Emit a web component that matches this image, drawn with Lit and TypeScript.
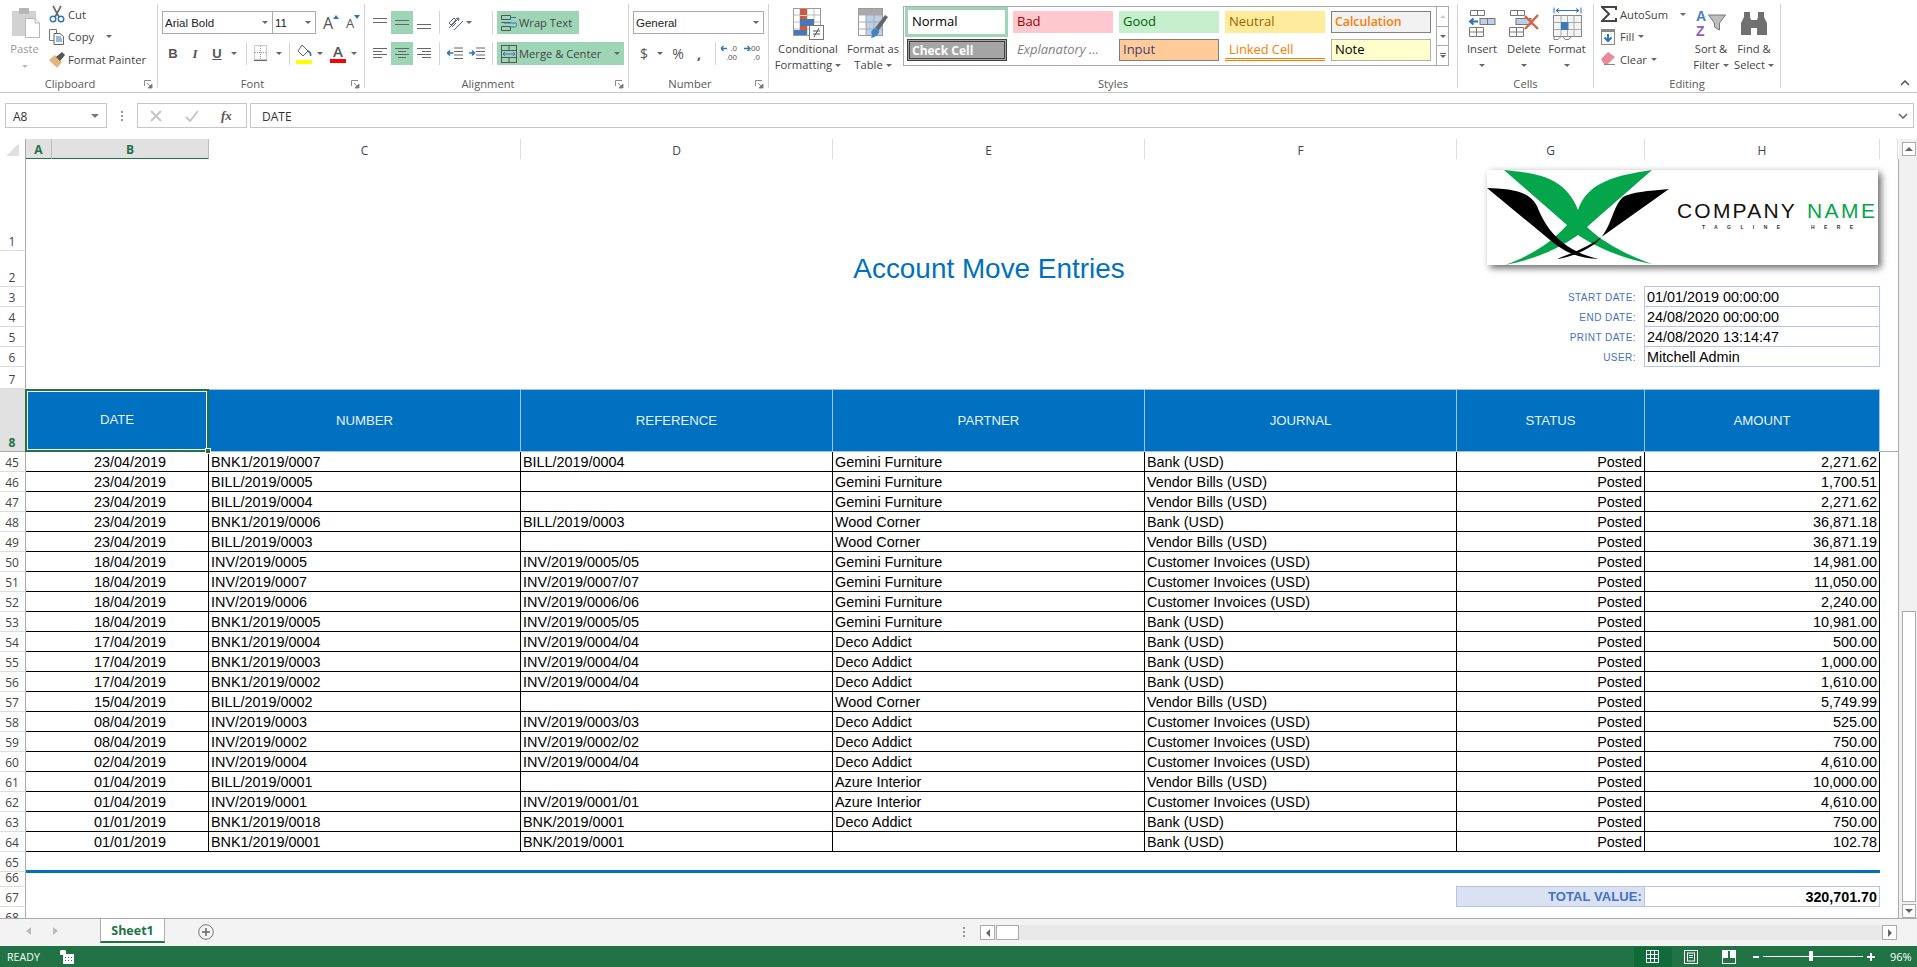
import { LitElement, html, css, svg } from "lit";
import { customElement } from "lit/decorators.js";

type Row = [string, string, string, string, string, string, string, string];
const G = "Gemini Furniture", D = "Deco Addict", W = "Wood Corner", Z = "Azure Interior";
const B = "Bank (USD)", V = "Vendor Bills (USD)", C = "Customer Invoices (USD)";
const ROWS: Row[] = [
  ["45","23/04/2019","BNK1/2019/0007","BILL/2019/0004",G,B,"Posted","2,271.62"],
  ["46","23/04/2019","BILL/2019/0005","",G,V,"Posted","1,700.51"],
  ["47","23/04/2019","BILL/2019/0004","",G,V,"Posted","2,271.62"],
  ["48","23/04/2019","BNK1/2019/0006","BILL/2019/0003",W,B,"Posted","36,871.18"],
  ["49","23/04/2019","BILL/2019/0003","",W,V,"Posted","36,871.19"],
  ["50","18/04/2019","INV/2019/0005","INV/2019/0005/05",G,C,"Posted","14,981.00"],
  ["51","18/04/2019","INV/2019/0007","INV/2019/0007/07",G,C,"Posted","11,050.00"],
  ["52","18/04/2019","INV/2019/0006","INV/2019/0006/06",G,C,"Posted","2,240.00"],
  ["53","18/04/2019","BNK1/2019/0005","INV/2019/0005/05",G,B,"Posted","10,981.00"],
  ["54","17/04/2019","BNK1/2019/0004","INV/2019/0004/04",D,B,"Posted","500.00"],
  ["55","17/04/2019","BNK1/2019/0003","INV/2019/0004/04",D,B,"Posted","1,000.00"],
  ["56","17/04/2019","BNK1/2019/0002","INV/2019/0004/04",D,B,"Posted","1,610.00"],
  ["57","15/04/2019","BILL/2019/0002","",W,V,"Posted","5,749.99"],
  ["58","08/04/2019","INV/2019/0003","INV/2019/0003/03",D,C,"Posted","525.00"],
  ["59","08/04/2019","INV/2019/0002","INV/2019/0002/02",D,C,"Posted","750.00"],
  ["60","02/04/2019","INV/2019/0004","INV/2019/0004/04",D,C,"Posted","4,610.00"],
  ["61","01/04/2019","BILL/2019/0001","",Z,V,"Posted","10,000.00"],
  ["62","01/04/2019","INV/2019/0001","INV/2019/0001/01",Z,C,"Posted","4,610.00"],
  ["63","01/01/2019","BNK1/2019/0018","BNK/2019/0001",D,B,"Posted","750.00"],
  ["64","01/01/2019","BNK1/2019/0001","BNK/2019/0001","",B,"Posted","102.78"],
];
const INFO: [string, string, string][] = [
  ["3","START DATE:","01/01/2019 00:00:00"],
  ["4","END DATE:","24/08/2020 00:00:00"],
  ["5","PRINT DATE:","24/08/2020 13:14:47"],
  ["6","USER:","Mitchell Admin"],
];
const COLS = ["C","D","E","F","G","H"];
const HEADS = ["NUMBER","REFERENCE","PARTNER","JOURNAL","STATUS","AMOUNT"];

const caret = html`<span class="caret"></span>`;
const launcher = html`<svg class="launch" width="9" height="9" viewBox="0 0 9 9"><path d="M0.5 6V0.5H7" fill="none" stroke="#8a8a8a"/><path d="M3 3l4 4M8 4v4H4z" fill="#777" stroke="#777" stroke-width=".8"/></svg>`;
const bars = (rows: number[][], w = 14, h = 14, c = "#666") => html`<svg width=${w} height=${h} viewBox="0 0 ${w} ${h}">${rows.map(r => svg`<rect x=${r[0]} y=${r[1]} width=${r[2]} height="1" fill=${c}/>`)}</svg>`;

const iPaste = html`<svg width="28" height="30" viewBox="0 0 28 30"><rect x="0" y="3" width="24" height="25" fill="#d2d2d2"/><rect x="7" y="0" width="10" height="6" fill="#b5b5b5"/><path d="M13.5 10.5H23l4.5 4.5v14.5h-14z" fill="#fff" stroke="#b8b8b8"/><path d="M23 10.5V15h4.5" fill="none" stroke="#b8b8b8"/></svg>`;
const iCut = html`<svg width="16" height="18" viewBox="0 0 16 18"><path d="M4 1l6 11M12 1L6 12" stroke="#666" stroke-width="1.6" fill="none"/><circle cx="4" cy="14" r="2.8" fill="none" stroke="#2f75b5" stroke-width="1.4"/><circle cx="12" cy="14" r="2.8" fill="none" stroke="#2f75b5" stroke-width="1.4"/></svg>`;
const iCopy = html`<svg width="15" height="16" viewBox="0 0 15 16"><path d="M.5.5h7v11h-7z" fill="#fff" stroke="#777"/><path d="M5 4.5h6l3.5 3v8H5z" fill="#fff" stroke="#666"/><path d="M7 8h5M7 10h6M7 12h6" stroke="#2f75b5"/></svg>`;
const iBrush = html`<svg width="17" height="17" viewBox="0 0 17 17"><path d="M0 9l6-5 7 7-5 6C6 14 2 12 0 9z" fill="#e3b77b"/><path d="M7 6l6-5 3 3-5 6z" fill="#555"/></svg>`;
const iBorder = html`<svg width="19" height="17" viewBox="0 0 19 17"><rect x=".5" y=".5" width="12" height="14" fill="none" stroke="#999" stroke-dasharray="1 1"/><path d="M6.5 1v14M1 7.5h12" stroke="#999" stroke-dasharray="1 1"/><path d="M0 15.5h13" stroke="#666"/></svg>`;
const iFill = html`<svg width="16" height="20" viewBox="0 0 16 20"><path d="M6 1l6 6-5 5-5-5z" fill="#fff" stroke="#666"/><path d="M12 7c2 1 3 3 2.5 5" stroke="#2f75b5" stroke-width="1.6" fill="none"/><rect y="16" width="16" height="4" fill="#ffff00"/></svg>`;
const iOrient = html`<svg width="17" height="18" viewBox="0 0 17 18"><path d="M2 14L12 4" stroke="#666"/><path d="M12 4l-3 .5M12 4l-.5 3" stroke="#666"/><path d="M2 9l5-5 2 2-5 5zM5 13l4-4" fill="none" stroke="#666"/><path d="M7 16l9-9" stroke="#2f75b5"/></svg>`;
const iInd = (flip: boolean) => html`<svg width="16" height="13" viewBox="0 0 16 13"><path d="M7 1h9M7 4.5h9M7 8h9M7 11.5h9" stroke="#666"/>${flip ? svg`<path d="M0 6h5M3 3.5L5.5 6 3 8.5" fill="none" stroke="#2f75b5" stroke-width="1.6"/>` : svg`<path d="M.5 6h6M3 3.5L.5 6 3 8.5" fill="none" stroke="#2f75b5" stroke-width="1.6"/>`}</svg>`;
const iWrap = html`<svg width="17" height="18" viewBox="0 0 17 18"><path d="M.5 1.5h9v4h-9zM.5 12.5h9v4h-9z" fill="none" stroke="#555"/><path d="M.5 8.5h9" stroke="#555"/><path d="M9 3.5h6M3 9h12c1 0 1 4-1 4H8" stroke="#2f75b5" fill="none"/></svg>`;
const iMerge = html`<svg width="17" height="18" viewBox="0 0 17 18"><rect x=".5" y=".5" width="15" height="17" fill="none" stroke="#555"/><path d="M.5 5.5h15M.5 12.5h15M8 .5v5M8 12.5v5" stroke="#555"/><path d="M2 9h12M4 7L2 9l2 2M12 7l2 2-2 2" fill="none" stroke="#2f75b5"/></svg>`;
const iDec = (up: boolean) => html`<div class="decw"><span>${up ? ".0" : ".00"}</span><span>${up ? ".00" : ".0"}</span><svg width="7" height="7" viewBox="0 0 7 7"><path d="M0 3.500h6M${up ? "2.500 1L0 3.500 2.500 6" : "3.500 1L6 3.500 3.500 6"}" fill="none" stroke="#2f75b5" stroke-width="1.300"/></svg></div>`;
const iCond = html`<svg width="31" height="32" viewBox="0 0 31 32"><rect x=".5" y=".5" width="27" height="27" fill="#fff" stroke="#999"/><path d="M7 .5v27M14 .5v27M21 .5v27M.5 7h27M.5 14h27M.5 21h27" stroke="#bbb"/><rect x="7" y="1" width="7" height="6" fill="#d0593c"/><rect x="7" y="8" width="7" height="6" fill="#d0593c"/><rect x="7" y="11" width="14" height="7" fill="#4479b5"/><rect x="7" y="18" width="7" height="7" fill="#d0593c"/><rect x="1" y="22" width="13" height="5" fill="#4479b5"/><rect x="16.500" y="17.500" width="14" height="14" fill="#fff" stroke="#777"/><path d="M20 23h7M20 26h7M26 20l-5 9" stroke="#555" fill="none"/></svg>`;
const iTable = html`<svg width="31" height="32" viewBox="0 0 31 32"><rect x=".5" y=".5" width="24" height="27" fill="#fff" stroke="#999"/><rect x="1" y="1" width="23" height="6" fill="#a9a9a9"/><rect x="8" y="7" width="16" height="20" fill="#bcd0e8"/><path d="M8 .5v27M16 .5v27M.5 7h24M.5 14h24M.5 21h24" stroke="#aaa"/><path d="M17 20l10-13 3 2-9 13z" fill="#666"/><path d="M13 24c2-4 6-5 8-2 1 3-2 7-8 8 1-2 1-4 0-6z" fill="#3f83c4"/></svg>`;
const iInsert = html`<svg width="27" height="27" viewBox="0 0 27 27"><path d="M1.500.5h14v5h-14zM8.500.5v5M.5 17.500h14v9H.500zM7.500 17.500v9M.5 22h14" fill="none" stroke="#777"/><rect x="11" y="8.500" width="15" height="6" fill="#bcd0e8" stroke="#777"/><path d="M18.500 8.500v6" stroke="#777"/><path d="M1 11.500h8M4.500 8.500L1 11.500l3.500 3" fill="none" stroke="#2f75b5" stroke-width="2"/></svg>`;
const iDelete = html`<svg width="31" height="27" viewBox="0 0 31 27"><path d="M1.500.5h14v5h-14zM8.500.5v5M.5 17.500h14v9H.500zM7.500 17.500v9M.5 22h14" fill="none" stroke="#777"/><rect x="7" y="8.500" width="15" height="6" fill="#bcd0e8" stroke="#777"/><path d="M16 6l13 13M29 5L16 19" stroke="#d9633f" stroke-width="2.400"/></svg>`;
const iFormat = html`<svg width="29" height="33" viewBox="0 0 29 33"><path d="M1 .5v6M28 .5v6M3 3.500h23M6 1.500l-3 2 3 2M23 1.500l3 2-3 2" fill="none" stroke="#2f75b5"/><rect x=".5" y="8.500" width="28" height="21" fill="#f4f4f4" stroke="#888"/><path d="M8 8.500v21M21 8.500v21M14.500 8.500v21M.5 15.500h28M.5 22.500h28" stroke="#aaa"/><rect x="8" y="15" width="7.500" height="8" fill="#3f7ab5"/><path d="M1 29.500v3h4l3-3M10 29.500l2 3h4l2-3" fill="none" stroke="#888"/></svg>`;
const iSigma = html`<svg width="16" height="16" viewBox="0 0 16 16"><path d="M15 4V1H1l7 7-7 7h14v-3" fill="none" stroke="#444" stroke-width="2"/></svg>`;
const iFillDown = html`<svg width="14" height="16" viewBox="0 0 14 16"><rect x=".5" y=".5" width="13" height="15" fill="#fff" stroke="#888"/><rect width="14" height="3" fill="#888"/><path d="M7 5v7M3.500 8.500L7 12l3.500-3.500" fill="none" stroke="#2f75b5" stroke-width="2"/></svg>`;
const iEraser = html`<svg width="15" height="14" viewBox="0 0 15 14"><path d="M0 7l7-7 7 5-7 7H3z" fill="#e98a99"/><path d="M3 12.500h11" stroke="#888"/></svg>`;
const iSort = html`<div class="sortic"><div class="azs"><span class="azA">A</span><span class="azZ">Z</span></div><svg width="18" height="17" viewBox="0 0 18 17"><path d="M.5 1h17l-6 8v7l-5-3V9z" fill="#bdbdbd" stroke="#777"/></svg></div>`;
const iFind = html`<svg width="26" height="25" viewBox="0 0 26 25"><path d="M3 6V1h6v5l1 3v15H0V12zM17 6V1h6v5l3 6v12H16V9z" fill="#707070"/><path d="M10 9h6v8h-6z" fill="#707070"/></svg>`;
const iMacro = html`<svg width="14" height="14" viewBox="0 0 14 14"><rect x="3" y="4" width="11" height="10" fill="#fff"/><rect x="0" y="0" width="6" height="5" fill="#fff" rx="1"/><path d="M5 7h1v1H5zM8 7h1v1H8zM11 7h1v1h-1zM5 10h1v1H5zM8 10h1v1H8zM11 10h1v1h-1z" fill="#217346"/></svg>`;
const viewGrid = html`<svg width="14" height="14" viewBox="0 0 14 14"><rect x=".5" y=".5" width="12" height="12" fill="none" stroke="#fff"/><path d="M4.500 .5v12M8.500 .5v12M.5 4.500h12M.5 8.500h12" stroke="#fff"/></svg>`;
const viewPage = html`<svg width="14" height="14" viewBox="0 0 14 14"><rect x=".5" y=".5" width="13" height="13" fill="none" stroke="#fff"/><rect x="3.500" y="3" width="7" height="8" fill="none" stroke="#fff"/><path d="M5 5.500h4M5 7.500h4" stroke="#fff"/></svg>`;
const viewBreak = html`<svg width="14" height="14" viewBox="0 0 14 14"><rect x=".5" y=".5" width="13" height="13" fill="none" stroke="#fff"/><rect x="1" y="1" width="5" height="7" fill="#fff"/><rect x="8" y="1" width="5" height="7" fill="#fff"/></svg>`;
const logo = html`<svg class="logo-svg" width="391" height="95" viewBox="0 0 391 95">
  <path d="M17 0C45 3 78 5 91 40C100 12 130 5 165 0L100 57C115 72 140 85 165 94C140 90 110 78 91 65C70 80 45 90 18 95C45 85 65 72 80 55Z" fill="#05a54b"/>
  <path d="M0 18C22 19 42 20 50 36C58 56 72 80 112 89C92 88 80 84 63 70Z" fill="#000"/>
  <path d="M182 19C160 21 145 22 136 27C124 38 125 62 106 75C96 82 84 87 70 89C82 84 100 78 113 68Z" fill="#000"/>
</svg>`;

@customElement("app-root")
export class AppRoot extends LitElement {
  static styles = css`
    :host { display: flex; flex-direction: column; width: 1917px; height: 967px; overflow: hidden; background: #fff; font-family: "Open Sans", "Noto Sans", sans-serif; color: #444; }
    * { box-sizing: border-box; }
    svg { display: block; flex: none; }
    /* ribbon */
    .ribbon { display: flex; height: 93px; padding-top: 4px; border-bottom: 1px solid #c6c6c6; font-size: 11.2px; flex: none; }
    .group { display: flex; flex-direction: column; height: 84px; border-right: 1px solid #d4d4d4; flex: none; }
    .body { height: 73px; display: flex; }
    .foot { display: flex; height: 11px; line-height: 14px; color: #5a5a5a; }
    .foot span { flex: 1; text-align: center; }
    .launch { margin: 3px 4px 0 4px; }
    .g-clip { width: 158px; } .g-font { width: 207px; } .g-align { width: 264px; } .g-num { width: 140px; } .g-sty { width: 689px; } .g-cells { width: 136px; } .g-edit { width: 187px; }
    .paste { width: 49px; display: flex; flex-direction: column; align-items: center; color: #9a9a9a; padding-top: 4px; }
    .paste svg { margin-left: 3px; }
    .paste .lbl { margin-top: 3px; line-height: 15px; }
    .paste .caret { margin-top: 9px; border-top-color: #bbb; }
    .list { display: flex; flex-direction: column; margin-top: -1px; }
    .l-edit { width: 88px; flex: none; }
    .li { height: 22.5px; display: flex; align-items: center; white-space: nowrap; }
    .li .ic { width: 19px; flex: none; }
    .li .caret { margin-left: 4px; }
    .li .far { margin-left: 12px; }
    .rows { display: flex; flex-direction: column; gap: 8px; padding-top: 7px; }
    .rw { height: 23px; display: flex; align-items: center; }
    .pl4 { padding-left: 4px; } .pl3 { padding-left: 3px; } .pl8 { padding-left: 8px; } .pl7 { padding-left: 7px; }
    .t { display: flex; align-items: center; justify-content: center; height: 23px; flex: none; }
    .w10 { width: 10px; } .w12 { width: 12px; } .w14 { width: 14px; } .w15 { width: 15px; } .w16 { width: 16px; } .w19 { width: 19px; } .w22 { width: 22px; } .w26 { width: 26px; }
    .ml2 { margin-left: 2px; } .ml4 { margin-left: 4px; } .ml6 { margin-left: 6px; } .ml7 { margin-left: 7px; } .ml8 { margin-left: 8px; } .ml17 { margin-left: 17px; }
    .on { background: #9fd5b7; }
    .sep { width: 1px; height: 23px; background: #d4d4d4; flex: none; }
    .caret { display: inline-block; width: 0; height: 0; border-left: 3px solid transparent; border-right: 3px solid transparent; border-top: 3px solid #666; flex: none; }
    .combo { height: 23px; border: 1px solid #ababab; display: flex; align-items: center; justify-content: space-between; padding: 0 4px 0 2px; color: #222; background: #fff; flex: none; font-family: "Liberation Sans", sans-serif; font-size: 11.5px; }
    .c-font { width: 111px; } .c-size { width: 44px; margin-left: -1px; } .c-gen { width: 131px; }
    .ab { display: flex; align-items: flex-start; color: #555; font-size: 16px; line-height: 20px; }
    .ab i { display: block; width: 0; height: 0; border-left: 3px solid transparent; border-right: 3px solid transparent; margin-top: 2px; }
    .ab .up { border-bottom: 4px solid #2f75b5; } .ab .dn { border-top: 4px solid #2f75b5; }
    .ab.sm { font-size: 13px; }
    .bold { font-weight: 700; font-family: "Liberation Sans", sans-serif; font-size: 13px; color: #555; }
    .ital { font-style: italic; font-weight: 700; font-family: "Liberation Serif", serif; font-size: 13px; color: #555; }
    .und { text-decoration: underline; font-weight: 700; font-family: "Liberation Sans", sans-serif; font-size: 13px; color: #555; }
    .fc { display: flex; flex-direction: column; align-items: center; width: 16px; line-height: 15px; font-size: 15px; color: #555; font-weight: 600; }
    .fc b { display: block; width: 16px; height: 4px; background: #f00; }
    .ww { width: 82px; justify-content: flex-start; padding-left: 4px; gap: 1px; white-space: nowrap; }
    .mm { width: 127px; justify-content: flex-start; padding-left: 4px; gap: 1px; white-space: nowrap; }
    .mm .caret { margin-left: 12px; }
    .dollar { font-size: 14px; color: #555; } .pct { font-size: 14px; color: #555; } .cm { font-size: 14px; font-weight: 700; color: #555; }
    .decw { position: relative; width: 15px; height: 19px; display: flex; flex-direction: column; align-items: flex-end; font: 8px/9px "Liberation Sans", sans-serif; color: #555; }
    .decw svg { position: absolute; left: -1px; top: 1px; }
    .big { display: flex; flex-direction: column; align-items: center; padding-top: 2px; line-height: 16px; white-space: nowrap; flex: none; }
    .big .pic { height: 35px; display: flex; align-items: center; }
    .big .caret { margin-top: 7px; }
    .big .ln .caret { margin: 0 0 2px 3px; vertical-align: middle; }
    .b-cf { width: 78px; } .b-ft { width: 52px; } .b-in { width: 42px; } .b-del { width: 42px; } .b-fo { width: 44px; } .b-so { width: 44px; } .b-fi { width: 42px; }
    .sortic { display: flex; width: 30px; align-items: flex-start; }
    .azs { display: flex; flex-direction: column; width: 12px; font: 700 14px/15px "Liberation Sans", sans-serif; }
    .azA { color: #3f83c4; } .azZ { color: #8f5db7; }
    .sortic svg { margin-top: 5px; }
    .gallery { display: flex; margin: 2px 0 0 4px; height: 60px; width: 546px; border: 1px solid #ababab; flex: none; background: #fff; }
    .styles { display: grid; grid-template-columns: repeat(5, 100px); grid-auto-rows: 22px; gap: 6px; padding: 4px 0 0 3px; font-size: 13px; }
    .s { display: flex; align-items: center; padding: 0 0 2px 4px; white-space: nowrap; overflow: hidden; }
    .s-normal { color: #000; box-shadow: 0 0 0 3px #9fd5b7; margin: -1px 2px -1px 1px; background: #fff; }
    .s-bad { background: #ffc7ce; color: #9c0006; } .s-good { background: #c6efce; color: #006100; } .s-neu { background: #ffeb9c; color: #9c6500; }
    .s-calc { background: #f2f2f2; color: #fa7d00; border: 1px solid #7f7f7f; font-weight: 600; padding-left: 3px; font-size: 12.3px; }
    .s-check { background: #a5a5a5; color: #fff; font-weight: 700; border: 3px double #3f3f3f; padding: 0 0 0 2px; font-size: 12px; }
    .s-exp { color: #7f7f7f; font-style: italic; }
    .s-input { background: #fc9; color: #3f3f76; border: 1px solid #7f7f7f; padding-left: 3px; }
    .s-link { color: #fa7d00; border-bottom: 3px double #fa7d00; padding-bottom: 0; font-size: 12.8px; }
    .s-note { background: #ffc; color: #000; border: 1px solid #b2b2b2; padding-left: 3px; }
    .gs { width: 13px; margin-left: 5px; display: flex; flex-direction: column; border-left: 1px solid #ababab; }
    .gs div { flex: 1; display: flex; align-items: center; justify-content: center; border-bottom: 1px solid #ababab; }
    .gs div:last-child { border-bottom: none; }
    .caret.light { border-top: none; border-bottom: 3px solid #ccc; }
    .gs .bar { flex-direction: column; gap: 1px; }
    .gs .bar i { display: block; width: 6px; height: 1px; background: #666; }
    .chev { margin: 0 0 0 auto; padding: 76px 7px 0 0; }
    /* formula */
    .fbar { height: 46px; display: flex; padding: 10px 3px 0 5px; align-items: flex-start; flex: none; font-size: 12px; color: #333; }
    .fbox { height: 25px; border: 1px solid #c6c6c6; display: flex; align-items: center; padding-top: 1px; }
    .name { width: 102px; padding: 1px 7px 0; justify-content: space-between; }
    .name .caret { border-left-width: 4px; border-right-width: 4px; border-top-width: 4px; border-top-color: #777; }
    .dots { width: 30px; display: flex; flex-direction: column; align-items: center; gap: 2px; height: 25px; justify-content: center; }
    .dots i { display: block; width: 2px; height: 2px; background: #999; }
    .fx { width: 110px; padding: 0 0 0 11px; gap: 22px; }
    .fx em { font-family: "Liberation Serif", serif; font-weight: 700; font-size: 13px; color: #555; }
    .finput { flex: 1; margin-left: 3px; padding: 1px 5px 0 11px; justify-content: space-between; font-family: "Open Sans", sans-serif; }
    /* sheet */
    .mid { flex: 1; display: flex; min-height: 0; }
    .pane { width: 1899px; display: flex; flex-direction: column; }
    .colhead, .sheet { display: grid; grid-template-columns: 26px 26px 157px 312px 312px 312px 312px 188px 235px 18px; }
    .colhead { height: 20px; font-size: 12px; color: #444; }
    .ch { display: flex; align-items: center; justify-content: center; padding-top: 2px; border-right: 1px solid #dedede; border-bottom: 1px solid #ababab; }
    .ch.sel { background: #e1e1e1; color: #217346; font-weight: 700; border-bottom: 2px solid #217346; border-right-color: #bdbdbd; }
    .corner { border-bottom: 1px solid #dedede; border-right: 1px solid #ababab; display: flex; align-items: center; justify-content: center; }
    .sheet { grid-template-rows: 92px 36px 20px 20px 20px 20px 22px 63px repeat(20, 20px) 20px 15px 20px 20px; height: 759px; overflow: hidden; border-right: 1px solid #ababab; position: relative; font-family: "Liberation Sans", sans-serif; font-size: 14.4px; color: #000; background: #fff; }
    .rh { border-right: 1px solid #ababab; border-bottom: 1px solid #dcdcdc; display: flex; align-items: flex-end; justify-content: center; font: 12px/17px "Open Sans", sans-serif; color: #444; padding-right: 1px; }
    .rh.sel { background: #e1e1e1; color: #217346; font-weight: 700; border-bottom-color: #ababab; }
    .s4 { grid-column: span 4; } .s6 { grid-column: span 6; } .s8 { grid-column: span 8; } .s9 { grid-column: span 9; }
    .title { display: flex; align-items: center; justify-content: center; font-size: 27.9px; color: #0070c0; white-space: nowrap; }
    .ilabel { display: flex; align-items: center; justify-content: flex-end; padding-right: 9px; font-size: 10px; letter-spacing: .45px; color: #4472c4; }
    .ival { border: 1px solid #b4c6e7; margin: -1px 0 0 -1px; display: flex; align-items: center; padding-left: 2px; }
    .hc { background: #0070c0; color: #e8f1fa; font-size: 13.2px; display: flex; align-items: center; justify-content: center; border: solid #9dc3e6; border-width: 1px 1px 1px 0; }
    .hc.first { grid-column: span 2; margin-left: -1px; border: 2px solid #217346; box-shadow: inset 0 0 0 1px #fff; padding-bottom: 2px; position: relative; }
    .handle { position: absolute; right: -4px; bottom: -4px; width: 6px; height: 6px; background: #217346; border: 1px solid #fff; }
    .fr { border-bottom: 1px solid #ababab; }
    .c { border-bottom: 1px solid #000; border-right: 1px solid #000; display: flex; align-items: center; padding: 0 2px; white-space: nowrap; overflow: hidden; }
    .c.a { border-right: none; }
    .c.ctr { justify-content: center; }
    .c.r { justify-content: flex-end; }
    .rule { height: 3px; background: #0070c0; margin-top: -2px; }
    .tot { margin: -1px 0 0 -1px; border: 1px solid #b4c6e7; display: flex; align-items: center; justify-content: flex-end; padding-right: 2px; font-weight: 700; }
    .tot.l { background: #d9e1f2; color: #4472c4; font-size: 13px; letter-spacing: .1px; }
    .tot.val { font-size: 14.3px; }
    .logo { position: absolute; left: 1487px; top: 11px; width: 391px; height: 95px; box-shadow: 3px 3px 7px rgba(0,0,0,.6); background: #fff; }
    .logo-svg { position: absolute; left: 0; top: 0; }
    .lgt { position: absolute; left: 190px; top: 29px; display: flex; gap: 10px; font: 21px/24px "Liberation Sans", sans-serif; color: #111; white-space: nowrap; letter-spacing: 2.2px; }
    .lgt b { font-weight: 400; color: #05a54b; letter-spacing: 2.4px; }
    .tag { position: absolute; left: 215px; top: 54px; font: 700 5px/7px "Liberation Sans", sans-serif; color: #333; letter-spacing: 9.4px; white-space: pre; }
    /* scrollbars */
    .vs { width: 18px; background: #f1f1f1; display: flex; flex-direction: column; padding: 3px 1px 0 3px; }
    .sb { border: 1px solid #ababab; background: #fff; display: flex; align-items: center; justify-content: center; flex: none; }
    .vs .btn { height: 14px; }
    .vs .thumb { height: 291px; margin-top: auto; }
    .vs .btn.dn { margin-top: 2px; }
    .caret.upc { border-top: none; border-bottom: 4px solid #666; border-left-width: 4px; border-right-width: 4px; }
    .caret.dnc { border-top-width: 4px; border-left-width: 4px; border-right-width: 4px; }
    /* tabs */
    .tabs { height: 28px; flex: none; border-top: 1px solid #ababab; background: #f3f3f3; display: flex; align-items: flex-start; }
    .nav { display: flex; width: 100px; padding: 8px 0 0 26px; gap: 22px; flex: none; }
    .lf { width: 0; height: 0; border: solid transparent; border-width: 4px 5px 4px 0; border-right-color: #bbb; }
    .rg { width: 0; height: 0; border: solid transparent; border-width: 4px 0 4px 5px; border-left-color: #bbb; }
    .tab { width: 65px; height: 24px; flex: none; background: #fff; border: solid #ababab; border-width: 0 1px; border-bottom: 2px solid #217346; color: #217346; font: 700 12.5px/23px "Open Sans", sans-serif; text-align: center; }
    .plus { margin: 5px 0 0 33px; }
    .tdots { margin: 8px 0 0 749px; display: flex; flex-direction: column; gap: 2px; }
    .tdots i { display: block; width: 2px; height: 2px; background: #999; }
    .hs { margin: 6px 0 0 15px; display: flex; width: 917px; height: 15px; background: #e9e9e9; flex: none; }
    .hs .sb { width: 15px; height: 15px; }
    .hs .thumb { width: 23px; height: 15px; margin-left: 1px; }
    .hs .end { margin-left: auto; }
    .lft { border: solid transparent; border-width: 4px 4px 4px 0; border-right-color: #666; }
    .rgt { border: solid transparent; border-width: 4px 0 4px 4px; border-left-color: #666; }
    /* status */
    .status { height: 21px; flex: none; background: #217346; color: #fff; display: flex; align-items: center; font-size: 10.5px; }
    .ready { width: 60px; padding-left: 7px; letter-spacing: .1px; flex: none; }
    .views { margin-left: 1560px; display: flex; height: 21px; align-items: center; flex: none; }
    .vw { width: 38px; height: 20px; display: flex; align-items: center; justify-content: center; margin-top: 1px; flex: none; }
    .vw.cur { background: #0f6b3a; }
    .zoom { display: flex; align-items: center; margin-left: 5px; height: 21px; flex: none; }
    .zoom .m { width: 6px; height: 2px; background: #fff; flex: none; }
    .zoom .tr { width: 100px; height: 1px; background: #fff; margin: 0 4px 0 4px; position: relative; flex: none; }
    .zoom .kn { position: absolute; left: 46px; top: -5px; width: 4px; height: 10px; background: #fff; }
    .zoom .p { width: 8px; height: 8px; position: relative; flex: none; }
    .zoom .p::before { content: ""; position: absolute; left: 0; top: 3px; width: 8px; height: 2px; background: #fff; }
    .zoom .p::after { content: ""; position: absolute; left: 3px; top: 0; width: 2px; height: 8px; background: #fff; }
    .pct2 { margin-left: 15px; font-size: 11px; flex: none; }
  `;

  render() {
    return html`
      <div class="ribbon">
        <div class="group g-clip">
          <div class="body">
            <div class="paste">${iPaste}<span class="lbl">Paste</span>${caret}</div>
            <div class="list">
              <div class="li"><span class="ic">${iCut}</span>Cut</div>
              <div class="li"><span class="ic">${iCopy}</span>Copy<span class="caret far"></span></div>
              <div class="li"><span class="ic">${iBrush}</span>Format Painter</div>
            </div>
          </div>
          <div class="foot"><span>Clipboard</span>${launcher}</div>
        </div>
        <div class="group g-font">
          <div class="body"><div class="rows pl4">
            <div class="rw">
              <div class="combo c-font">Arial Bold${caret}</div>
              <div class="combo c-size">11${caret}</div>
              <div class="t w22 ml4"><div class="ab">A<i class="up"></i></div></div>
              <div class="t w22"><div class="ab sm">A<i class="dn"></i></div></div>
            </div>
            <div class="rw">
              <div class="t w22 bold">B</div><div class="t w22 ital">I</div><div class="t w22 und">U</div><div class="t w12">${caret}</div>
              <div class="sep ml6"></div>
              <div class="t w19 ml7">${iBorder}</div><div class="t w12">${caret}</div>
              <div class="sep ml4"></div>
              <div class="t w16 ml6">${iFill}</div><div class="t w16">${caret}</div>
              <div class="t w16 ml2"><div class="fc">A<b></b></div></div><div class="t w16">${caret}</div>
            </div>
          </div></div>
          <div class="foot"><span>Font</span>${launcher}</div>
        </div>
        <div class="group g-align">
          <div class="body"><div class="rows pl8">
            <div class="rw">
              <div class="t w14">${bars([[0,2,14],[0,6,14]])}</div>
              <div class="t w22 ml4 on">${bars([[0,4,14],[0,8,14]])}</div>
              <div class="t w14 ml4">${bars([[0,8,14],[0,12,14]])}</div>
              <div class="sep ml8"></div>
              <div class="t w16 ml7">${iOrient}</div><div class="t w12">${caret}</div>
              <div class="sep ml17"></div>
              <div class="t on ml4 ww">${iWrap}Wrap Text</div>
            </div>
            <div class="rw">
              <div class="t w14">${bars([[0,1,14],[0,4,9],[0,7,14],[0,10,9]])}</div>
              <div class="t w22 ml4 on">${bars([[0,1,14],[3,4,8],[0,7,14],[3,10,8]])}</div>
              <div class="t w14 ml4">${bars([[0,1,14],[5,4,9],[0,7,14],[5,10,9]])}</div>
              <div class="sep ml8"></div>
              <div class="t w16 ml7">${iInd(false)}</div><div class="t w16 ml6">${iInd(true)}</div>
              <div class="sep ml7"></div>
              <div class="t on ml4 mm">${iMerge}Merge &amp; Center${caret}</div>
            </div>
          </div></div>
          <div class="foot"><span>Alignment</span>${launcher}</div>
        </div>
        <div class="group g-num">
          <div class="body"><div class="rows pl4">
            <div class="rw"><div class="combo c-gen">General${caret}</div></div>
            <div class="rw">
              <div class="t w22 dollar">$</div><div class="t w10">${caret}</div><div class="t w26 pct">%</div><div class="t w16 cm">,</div>
              <div class="sep ml8"></div>
              <div class="t w15 ml6">${iDec(true)}</div><div class="t w15 ml8">${iDec(false)}</div>
            </div>
          </div></div>
          <div class="foot"><span>Number</span>${launcher}</div>
        </div>
        <div class="group g-sty">
          <div class="body">
            <div class="big b-cf"><div class="pic">${iCond}</div><div class="ln">Conditional</div><div class="ln">Formatting<span class="caret"></span></div></div>
            <div class="big b-ft"><div class="pic">${iTable}</div><div class="ln">Format as</div><div class="ln">Table<span class="caret"></span></div></div>
            <div class="gallery">
              <div class="styles">
                <div class="s s-normal">Normal</div><div class="s s-bad">Bad</div><div class="s s-good">Good</div><div class="s s-neu">Neutral</div><div class="s s-calc">Calculation</div>
                <div class="s s-check">Check Cell</div><div class="s s-exp">Explanatory ...</div><div class="s s-input">Input</div><div class="s s-link">Linked Cell</div><div class="s s-note">Note</div>
              </div>
              <div class="gs"><div><span class="caret light"></span></div><div>${caret}</div><div class="bar"><i></i>${caret}</div></div>
            </div>
          </div>
          <div class="foot"><span>Styles</span></div>
        </div>
        <div class="group g-cells">
          <div class="body pl3">
            <div class="big b-in"><div class="pic">${iInsert}</div><div class="ln">Insert</div>${caret}</div>
            <div class="big b-del"><div class="pic">${iDelete}</div><div class="ln">Delete</div>${caret}</div>
            <div class="big b-fo"><div class="pic">${iFormat}</div><div class="ln">Format</div>${caret}</div>
          </div>
          <div class="foot"><span>Cells</span></div>
        </div>
        <div class="group g-edit">
          <div class="body pl7">
            <div class="list l-edit">
              <div class="li"><span class="ic">${iSigma}</span>AutoSum<span class="caret far"></span></div>
              <div class="li"><span class="ic">${iFillDown}</span>Fill<span class="caret"></span></div>
              <div class="li"><span class="ic">${iEraser}</span>Clear<span class="caret"></span></div>
            </div>
            <div class="big b-so"><div class="pic">${iSort}</div><div class="ln">Sort &amp;</div><div class="ln">Filter<span class="caret"></span></div></div>
            <div class="big b-fi"><div class="pic">${iFind}</div><div class="ln">Find &amp;</div><div class="ln">Select<span class="caret"></span></div></div>
          </div>
          <div class="foot"><span>Editing</span></div>
        </div>
        <div class="chev"><svg width="10" height="6" viewBox="0 0 10 6"><path d="M1 5l4-4 4 4" fill="none" stroke="#555" stroke-width="1.500"/></svg></div>
      </div>

      <div class="fbar">
        <div class="fbox name">A8<span class="caret"></span></div>
        <div class="dots"><i></i><i></i><i></i></div>
        <div class="fbox fx">
          <svg width="14" height="14" viewBox="0 0 14 14"><path d="M2 2l10 10M12 2L2 12" stroke="#c6c6c6" stroke-width="2"/></svg>
          <svg width="14" height="14" viewBox="0 0 14 14"><path d="M1 8l4 4 8-10" fill="none" stroke="#c6c6c6" stroke-width="2"/></svg>
          <em>fx</em>
        </div>
        <div class="fbox finput">DATE<svg width="10" height="6" viewBox="0 0 10 6"><path d="M1 1l4 4 4-4" fill="none" stroke="#666" stroke-width="1.500"/></svg></div>
      </div>

      <div class="mid">
        <div class="pane">
          <div class="colhead">
            <div class="corner"><svg width="13" height="13" viewBox="0 0 13 13"><path d="M13 0v13H0z" fill="#e1e1e1"/></svg></div>
            <div class="ch sel">A</div><div class="ch sel">B</div>
            ${COLS.map(c => html`<div class="ch">${c}</div>`)}
            <div class="ch"></div>
          </div>
          <div class="sheet">
            <div class="rh">1</div><div class="s9"></div>
            <div class="rh">2</div><div class="s4"></div><div class="title">Account Move Entries</div><div class="s4"></div>
            ${INFO.map(i => html`<div class="rh">${i[0]}</div><div class="s6"></div><div class="ilabel">${i[1]}</div><div class="ival">${i[2]}</div><div></div>`)}
            <div class="rh">7</div><div class="s9"></div>
            <div class="rh sel">8</div>
            <div class="hc first">DATE<span class="handle"></span></div>
            ${HEADS.map(h => html`<div class="hc">${h}</div>`)}
            <div class="fr"></div>
            ${ROWS.map(r => html`
              <div class="rh">${r[0]}</div>
              <div class="c a"></div>
              <div class="c ctr">${r[1]}</div>
              <div class="c">${r[2]}</div><div class="c">${r[3]}</div><div class="c">${r[4]}</div><div class="c">${r[5]}</div>
              <div class="c r">${r[6]}</div><div class="c r">${r[7]}</div><div></div>`)}
            <div class="rh">65</div><div class="s9"></div>
            <div class="rh">66</div><div class="s8"><div class="rule"></div></div><div></div>
            <div class="rh">67</div><div class="s6"></div><div class="tot l">TOTAL VALUE:</div><div class="tot val">320,701.70</div><div></div>
            <div class="rh">68</div><div class="s9"></div>
            <div class="logo">${logo}<div class="lgt"><span>COMPANY</span><b>NAME</b></div><div class="tag">TAGLINE  HERE</div></div>
          </div>
        </div>
        <div class="vs">
          <div class="sb btn"><span class="caret upc"></span></div>
          <div class="sb thumb"></div>
          <div class="sb btn dn"><span class="caret dnc"></span></div>
        </div>
      </div>

      <div class="tabs">
        <div class="nav"><span class="lf"></span><span class="rg"></span></div>
        <div class="tab">Sheet1</div>
        <div class="plus"><svg width="16" height="16" viewBox="0 0 16 16"><circle cx="8" cy="8" r="7.300" fill="none" stroke="#777"/><path d="M4 8h8M8 4v8" stroke="#666" stroke-width="1.500"/></svg></div>
        <div class="tdots"><i></i><i></i><i></i></div>
        <div class="hs">
          <div class="sb"><span class="caret lft"></span></div>
          <div class="sb thumb"></div>
          <div class="sb end"><span class="caret rgt"></span></div>
        </div>
      </div>

      <div class="status">
        <div class="ready">READY</div>
        ${iMacro}
        <div class="views">
          <div class="vw cur">${viewGrid}</div><div class="vw">${viewPage}</div><div class="vw">${viewBreak}</div>
        </div>
        <div class="zoom"><span class="m"></span><span class="tr"><span class="kn"></span></span><span class="p"></span></div>
        <div class="pct2">96%</div>
      </div>
    `;
  }
}
